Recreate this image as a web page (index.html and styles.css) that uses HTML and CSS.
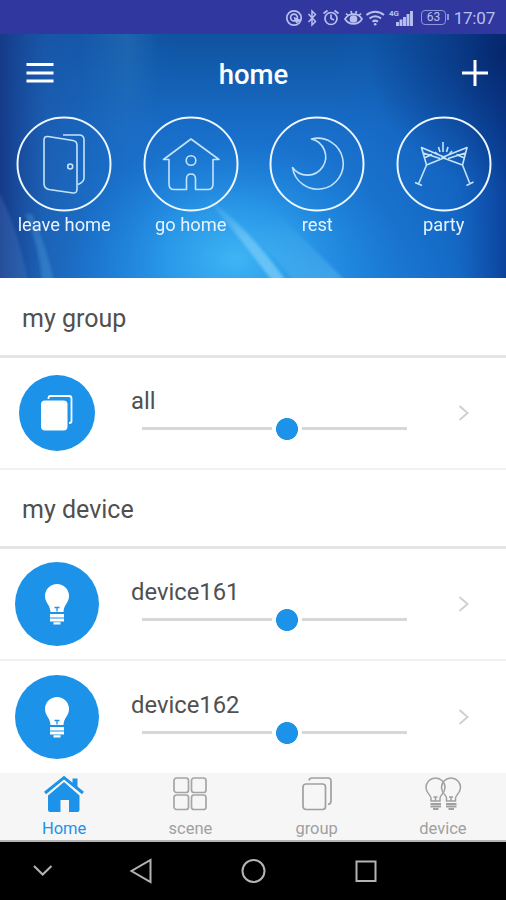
FILE: index.html
```html
<!DOCTYPE html>
<html lang="en">
<head>
<meta charset="utf-8">
<title>home</title>
<link rel="stylesheet" href="styles.css">
</head>
<body>
<svg width="0" height="0" class="defs">
  <symbol id="bulb" viewBox="0 0 26 42">
    <path d="M13 1a12 12 0 0 1 12 12c0 7-5 8-5.500 16h-13C6 21 1 20 1 13A12 12 0 0 1 13 1z" fill="#fff"/>
    <path d="M10.500 24.500h5M13 24.500v4" stroke="#1c93e8" stroke-width="1.300" fill="none"/>
    <path d="M6 31h14v3.500H6zM6 35.400h14v3H6zM9.500 39.200h7v2.300h-7z" fill="#fff"/>
  </symbol>
  <symbol id="chev" viewBox="0 0 12 18"><path d="M1.500 2l8 7-8 7" fill="none" stroke="#d0d0d0" stroke-width="2"/></symbol>
</svg>
<div class="phone">
  <div class="status">
    <svg class="status-icons" width="132" height="24" viewBox="0 0 132 24" fill="none" stroke="#b9c0ef" stroke-width="1.700">
      <circle cx="9" cy="12" r="7.200"/><circle cx="9" cy="11.500" r="3.400"/><path d="M9 11.500l6 2.500-3.500 3z" fill="#b9c0ef" stroke-width="1"/>
      <path d="M23.500 8l7 7.500-3.500 3.500v-14l3.500 3.500-7 7.500" stroke-width="1.500"/>
      <circle cx="46" cy="12.500" r="6"/><path d="M46 8.500v4l3 1.500M38.500 7.500l4-3M53.500 7.500l-4-3"/>
      <path d="M60 13c4-6.500 13-6.500 17 0-4 6.500-13 6.500-17 0zM61 7.500l2 2M66 5l.7 2.500M71.500 5l-.7 2.500M76 7.500l-2 2"/><circle cx="68.500" cy="13" r="3" fill="#b9c0ef"/>
      <path d="M81.500 9c5-4.500 12.500-4.500 17.500 0M84.500 12.500c3.300-3 8.300-3 11.500 0M87.500 15.700c1.700-1.300 3.800-1.300 5.500 0" stroke-width="2"/><circle cx="90.200" cy="18.200" r="1.300" fill="#b9c0ef" stroke="none"/>
      <path d="M112.500 16v4M116 13.500V20M119.500 11v9M123 8v12M126.500 5v15" stroke-width="2.900"/>
    </svg>
    <span class="net">4G</span>
    <span class="battery">63</span>
    <span class="time">17:07</span>
  </div>

  <header class="hero">
    <svg class="hero-bg" width="506" height="244" viewBox="0 0 506 244" preserveAspectRatio="none">
      <defs>
        <linearGradient id="base" x1="0" y1="0" x2="0" y2="1"><stop offset="0" stop-color="#0f529f"/><stop offset=".4" stop-color="#186ec9"/><stop offset="1" stop-color="#1e84dd"/></linearGradient>
        <linearGradient id="left" x1="0" y1="0" x2="1" y2="0"><stop offset="0" stop-color="#153a88"/><stop offset=".09" stop-color="#1c57a9" stop-opacity=".7"/><stop offset=".35" stop-color="#1768c3" stop-opacity="0"/></linearGradient>
        <linearGradient id="right" x1="0" y1="0" x2="1" y2="0"><stop offset=".65" stop-color="#1364bf" stop-opacity="0"/><stop offset=".9" stop-color="#0f59b8" stop-opacity=".6"/><stop offset="1" stop-color="#0b429c"/></linearGradient>
        <radialGradient id="glow" gradientUnits="userSpaceOnUse" cx="0" cy="0" r="1" gradientTransform="translate(235 225) scale(165 125)"><stop offset="0" stop-color="#3fb5f5"/><stop offset=".4" stop-color="#2fa3ee" stop-opacity=".75"/><stop offset="1" stop-color="#1d82df" stop-opacity="0"/></radialGradient>
        <radialGradient id="corner" gradientUnits="userSpaceOnUse" cx="506" cy="15" r="140"><stop offset="0" stop-color="#041f60" stop-opacity=".8"/><stop offset="1" stop-color="#041f60" stop-opacity="0"/></radialGradient>
        <linearGradient id="beam" x1="0" y1="0" x2="1" y2="0"><stop offset="0" stop-color="#3e86bd" stop-opacity="0"/><stop offset=".6" stop-color="#3e86bd" stop-opacity=".3"/><stop offset="1" stop-color="#3e86bd" stop-opacity="0"/></linearGradient>
        <linearGradient id="fade" x1="0" y1="0" x2="0" y2="1"><stop offset="0" stop-color="#fff"/><stop offset="1" stop-color="#000"/></linearGradient>
        <mask id="beam-mask"><rect x="60" width="120" height="140" fill="url(#fade)"/></mask>
        <linearGradient id="ray" gradientUnits="userSpaceOnUse" x1="215" y1="160" x2="275" y2="244"><stop offset="0" stop-color="#8cd8fb" stop-opacity=".05"/><stop offset=".5" stop-color="#8cd8fb" stop-opacity=".5"/><stop offset="1" stop-color="#8cd8fb" stop-opacity=".6"/></linearGradient>
        <linearGradient id="ray2" gradientUnits="userSpaceOnUse" x1="275" y1="175" x2="325" y2="244"><stop offset="0" stop-color="#65c1f5" stop-opacity="0"/><stop offset="1" stop-color="#65c1f5" stop-opacity=".4"/></linearGradient>
        <filter id="soft"><feGaussianBlur stdDeviation="1.500"/></filter>
      </defs>
      <rect width="506" height="244" fill="url(#base)"/>
      <rect width="506" height="244" fill="url(#left)"/>
      <rect width="506" height="244" fill="url(#right)"/>
      <rect x="80" width="80" height="140" fill="url(#beam)" mask="url(#beam-mask)"/>
      <rect width="506" height="244" fill="url(#glow)"/>
      <rect width="506" height="244" fill="url(#corner)"/>
      <g filter="url(#soft)">
        <path d="M203 160q45 33 84 88h-14q-36-48-70-88z" fill="url(#ray)"/>
        <path d="M275 175q28 30 72 73h-52q-34-40-62-73z" fill="url(#ray2)"/>
        <path d="M25 180q14 30 17 68h12q-8-38-22-68z" fill="#65b5e8" opacity=".28"/>
        <path d="M28 248q-10-55-32-95v95z" fill="#5a8cd0" opacity=".25"/>
      </g>
    </svg>
    <div class="topbar">
      <svg width="28" height="22" viewBox="0 0 28 22"><path d="M.5 2.500h27M.5 11h27M.5 19h27" stroke="#fff" stroke-width="3.200"/></svg>
      <h1>home</h1>
      <svg width="28" height="28" viewBox="0 0 28 28"><path d="M1 14h26M14 1v26" stroke="#fff" stroke-width="3"/></svg>
    </div>
    <div class="scenes">
      <div class="scene">
        <svg width="96" height="96" viewBox="0 0 96 96"><circle cx="48" cy="48" r="46.500"/><g class="thin"><path d="M32 20.500l25 4q4 .7 4 5V73q0 4.500-4 4l-24-3.500q-5-1-5-6V24q0-4 4-3.500z"/><path d="M47 19h16q5 0 5 5v38q0 4-6 6.500"/><circle cx="54.200" cy="50.500" r="2.500"/></g></svg>
        <span>leave home</span>
      </div>
      <div class="scene">
        <svg width="96" height="96" viewBox="0 0 96 96"><circle cx="48" cy="48" r="46.500"/><g class="thin"><path d="M48 23L20.500 43.500H26V68q0 5.500 5 5.500h12.500V63q0-5 4.500-5t4.500 5v10.500H65q5 0 5-5.500V43.500h6z"/><circle cx="48" cy="44.500" r="4.800"/></g></svg>
        <span>go home</span>
      </div>
      <div class="scene">
        <svg width="96" height="96" viewBox="0 0 96 96"><circle cx="48" cy="48" r="46.500"/><g class="thin"><path d="M42.500 23A25.500 25.500 0 1 1 23.500 51.500A18.300 18.300 0 1 0 42.500 23z"/></g></svg>
        <span>rest</span>
      </div>
      <div class="scene">
        <svg width="96" height="96" viewBox="0 0 96 96"><circle cx="48" cy="48" r="46.500"/><g class="thin"><path d="M25.500 31.500L49 41.500l-18.500 7.500zM27 37l17 5.500M28 42l8-3.500M30.500 49L22.500 68M19 66.500l7 3M71 31.500L46 41.500l20.500 7.500zM69.500 37L52 42.500M68.500 42l-8-3.500M66.500 49L74 68M70.500 69.500l7-3.500"/><path d="M47 26v10M42.500 31l1.500 5M52 31l-1.500 5M39 36l3 2.500M56 35l-3 3.500"/></g></svg>
        <span>party</span>
      </div>
    </div>
  </header>

  <main>
    <h2>my group</h2>
    <div class="row group-row">
      <div class="disc small"><svg width="32" height="36" viewBox="0 0 32 36"><path d="M7.500 4V3q0-2 2-2H28q2.500 0 2.500 2.500V26q0 2-2 2H28" fill="none" stroke="#fff" stroke-width="1.800"/><rect x="0" y="5.500" width="26.500" height="30" rx="4" fill="#fff"/></svg></div>
      <div class="control"><span>all</span><div class="slider"><i></i></div></div>
      <svg class="chev" width="12" height="18"><use href="#chev"/></svg>
    </div>
    <h2>my device</h2>
    <div class="row">
      <div class="disc"><svg width="26" height="42"><use href="#bulb"/></svg></div>
      <div class="control"><span>device161</span><div class="slider"><i></i></div></div>
      <svg class="chev" width="12" height="18"><use href="#chev"/></svg>
    </div>
    <div class="row last">
      <div class="disc"><svg width="26" height="42"><use href="#bulb"/></svg></div>
      <div class="control"><span>device162</span><div class="slider"><i></i></div></div>
      <svg class="chev" width="12" height="18"><use href="#chev"/></svg>
    </div>
  </main>

  <nav class="tabs">
    <div class="tab active">
      <svg width="40" height="38" viewBox="0 0 40 38"><path d="M20 6l15.500 13.500V34q0 2-2 2H25V24h-8.500v12H6q-2 0-2-2V19.500z" fill="#1c93e8"/><path d="M1.500 17.800L20 2l18.500 15.800" fill="none" stroke="#f6f6f6" stroke-width="5"/><path d="M28.500 2.500h5v10l-5-4z" fill="#1c93e8"/><path d="M1 17L20 1.700 39 17" fill="none" stroke="#1c93e8" stroke-width="3"/></svg>
      <span>Home</span>
    </div>
    <div class="tab">
      <svg width="40" height="38" viewBox="0 0 40 38" fill="none" stroke="#a5a5a5" stroke-width="1.700"><rect x="4" y="2" width="14.500" height="14.500" rx="2.500"/><rect x="21.500" y="2" width="14.500" height="14.500" rx="2.500"/><rect x="4" y="19" width="14.500" height="14.500" rx="2.500"/><rect x="21.500" y="19" width="14.500" height="14.500" rx="2.500"/></svg>
      <span>scene</span>
    </div>
    <div class="tab">
      <svg width="40" height="38" viewBox="0 0 40 38" fill="none" stroke="#a0a0a0" stroke-width="1.700"><rect x="6" y="8" width="22.500" height="25.500" rx="3"/><path d="M12 4.500Q12.500 2 15 2h16q3 0 3 3v20q0 3-3 3.500"/></svg>
      <span>group</span>
    </div>
    <div class="tab">
      <svg width="40" height="38" viewBox="0 0 40 38" fill="none" stroke="#a0a0a0" stroke-width="1.500"><g id="b"><path d="M8 25v-3c0-3-5-4.500-5-10.500a9.500 9.500 0 0 1 19 0c0 6-5 7.500-5 10.500v3zM10.500 21h4M12.500 21v4"/><path d="M7.500 28h10.500M7.500 30.500h10.500M10 33h5.500" stroke-width="2"/></g><use href="#b" x="15.500"/></svg>
      <span>device</span>
    </div>
  </nav>

  <footer class="sysnav">
    <svg width="506" height="58" viewBox="0 0 506 58" fill="none" stroke="#b4b4b4" stroke-width="2"><path d="M34 24l8.700 8.500L51.500 24"/><path d="M150.500 18v22L131.500 29z"/><circle cx="253.500" cy="29" r="11"/><rect x="356.500" y="19.500" width="19" height="19.500"/></svg>
  </footer>
</div>
</body>
</html>
```

FILE: styles.css
```css
* { box-sizing: border-box; margin: 0; }
body { font-family: Roboto, "Liberation Sans", sans-serif; background: #fff; }
svg { display: block; flex: none; }
.defs { position: absolute; }
.phone { width: 506px; height: 900px; display: flex; flex-direction: column; overflow: hidden; }

.status { height: 34px; flex: none; background: #3038a0; color: #b9c0ef; display: flex; align-items: center; padding: 0 11px 0 285px; position: relative; }
.status-icons { margin-top: 1px; }
.net { position: absolute; left: 389px; top: 9px; font-size: 8px; line-height: 9px; font-weight: 700; }
.battery { width: 25px; height: 15px; margin-left: 4px; border: 1.5px solid #8e96d8; border-radius: 4px; font-size: 12px; line-height: 12px; text-align: center; position: relative; }
.battery::after { content: ""; position: absolute; right: -4px; top: 3px; width: 2px; height: 6px; background: #8e96d8; }
.time { margin-left: auto; font-size: 17px; letter-spacing: -.2px; padding-top: 1px; }

.hero { height: 244px; flex: none; position: relative; color: #fff; }
.hero-bg { position: absolute; left: 0; top: 0; }
.topbar { position: relative; height: 82px; padding: 0 17px 4px 26px; display: flex; align-items: center; justify-content: space-between; }
.topbar h1 { font-size: 27.5px; font-weight: 500; line-height: 32px; padding-top: 3px; margin-left: 10px; margin-right: 18px; }
.scenes { position: relative; display: grid; grid-template-columns: repeat(4, 1fr); padding-left: 1px; margin-right: -1px; }
.scene { display: flex; flex-direction: column; align-items: center; font-size: 18.3px; line-height: 25px; color: #e8f3ff; }
.scene svg { fill: none; stroke: #edf7ff; stroke-width: 2; }
.scene .thin { stroke: #c5e3fb; stroke-width: 1.6; stroke-linejoin: round; }

main { flex: none; height: 495px; color: #505050; }
h2 { height: 80px; border-bottom: 3px solid #e4e4e4; padding-left: 22px; font-size: 25px; font-weight: 400; line-height: 81px; }
.group-row + h2 { height: 79px; line-height: 79px; }
.row { height: 112px; border-bottom: 2px solid #f1f1f1; display: flex; align-items: center; padding-left: 15px; }
.last { height: 112px; border-bottom: 0; }
.disc { width: 84px; height: 84px; border-radius: 50%; background: #1c93e8; display: flex; align-items: center; justify-content: center; flex: none; }
.disc.small { width: 76px; height: 76px; margin: 0 4px; }
.control { width: 276px; margin-left: 32px; height: 56px; font-size: 23.8px; line-height: 28px; padding-top: 2px; }
.control span { display: block; }
.slider { height: 3px; background: #d7d7d7; margin: 12px 0 0 11px; display: flex; align-items: center; justify-content: center; }
.slider i { width: 30px; height: 24px; flex: none; background: radial-gradient(circle, #1c93e8 10.6px, #fff 11.3px); margin-left: 24px; }
.chev { margin-left: 51px; }

.tabs { height: 69px; flex: none; background: #f6f6f6; border-bottom: 2px solid #b5b5b5; display: grid; grid-template-columns: repeat(4, 1fr); padding-left: 1px; }
.tab { display: flex; flex-direction: column; align-items: center; padding-top: 3px; color: #a0a0a0; font-size: 16.5px; line-height: 20px; }
.tab span { margin-top: 5px; }
.active { color: #1c93e8; }
.sysnav { height: 58px; flex: none; background: #000; }
```
